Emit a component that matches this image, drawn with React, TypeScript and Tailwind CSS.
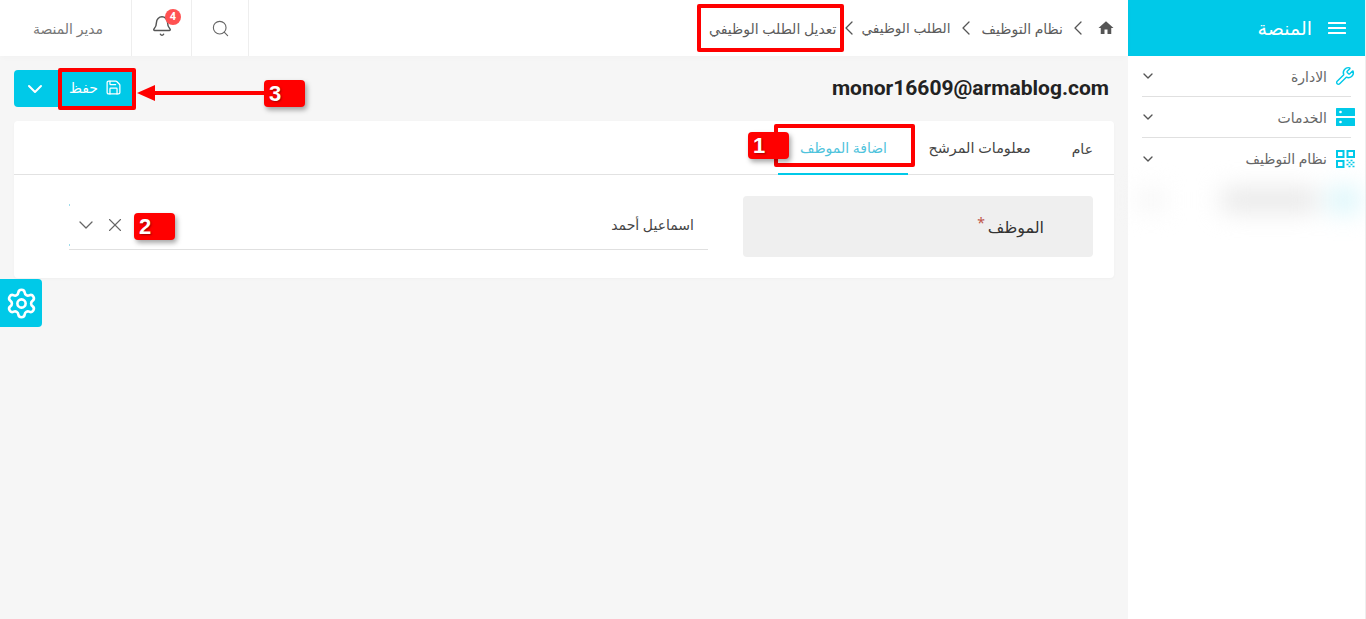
import React from 'react';
import { Bell, ChevronDown, ChevronLeft, Save, Search, Settings, Wrench, X } from 'lucide-react';

const font = "font-['Noto_Sans','DejaVu_Sans',sans-serif]";

const HomeIcon = () => (
    <svg width="18" height="18" viewBox="0 0 24 24" fill="#555555">
        <path d="M10 20v-6h4v6h5v-8h3L12 3 2 12h3v8z" />
    </svg>
);

const BurgerIcon = () => (
    <svg width="18" height="12" viewBox="0 0 18 12" fill="#ffffff">
        <rect x="0" y="0" width="18" height="2" rx="0.5" />
        <rect x="0" y="5" width="18" height="2" rx="0.5" />
        <rect x="0" y="10" width="18" height="2" rx="0.5" />
    </svg>
);

const ServerIcon = () => (
    <svg width="19" height="18" viewBox="0 0 19 18" fill="#00c9e8">
        <rect x="0" y="0" width="19" height="8" rx="0.5" />
        <rect x="0" y="10" width="19" height="8" rx="0.5" />
        <circle cx="4.500" cy="4" r="1.300" fill="#fff" />
        <circle cx="4.500" cy="14" r="1.300" fill="#fff" />
    </svg>
);

const QrIcon = () => (
    <svg width="19" height="18" viewBox="0 0 19 18" fill="none" stroke="#00c9e8" strokeWidth="2">
        <rect x="1" y="1" width="6.500" height="6" />
        <rect x="11.500" y="1" width="6.500" height="6" />
        <rect x="1" y="11" width="6.500" height="6" />
        <path d="M10.500 10.500h2M14.500 10.500h2M12.500 12.500h2M16.500 12.500h2M10.500 14.500h2M14.500 14.500h2M12.500 16.500h2M16.500 16.500h2" strokeWidth="1.700" />
    </svg>
);

const menuItems = [
    { label: 'الادارة', icon: <Wrench className="w-[22px] h-[22px] text-[#00c9e8] -ml-px" strokeWidth={1.7} /> },
    { label: 'الخدمات', icon: <ServerIcon /> },
    { label: 'نظام التوظيف', icon: <QrIcon /> },
];

const Sidebar = () => (
    <aside className="w-[238px] shrink-0 bg-white border-r border-[#eeeeee] flex flex-col">
        <div className="h-[56px] bg-[#00c9e8] flex items-center gap-[16px] pr-[19px] text-white">
            <BurgerIcon />
            <span className="text-[19px]">المنصة</span>
        </div>
        <div className="px-[14px]">
            {menuItems.map((item, i) => (
                <div
                    key={item.label}
                    className={`h-[41px] flex items-center ${i < 2 ? 'border-b border-[#e0e0e0]' : ''}`}
                >
                    <div className="w-[19px] -mr-[4px] flex justify-center">{item.icon}</div>
                    <span className="text-[14px] text-[#666666] mr-[9px]">{item.label}</span>
                    <ChevronDown className="w-[16px] h-[16px] mr-auto -ml-[2px] text-[#555555]" />
                </div>
            ))}
        </div>
        <div className="mt-[6px] h-[30px] flex items-center blur-[12px] pr-[6px] gap-[11px]">
            <div className="w-[30px] h-[24px] bg-[#d6f5fa]" />
            <div className="w-[96px] h-[22px] bg-[#e6e6e6]" />
            <div className="w-[20px] h-[20px] mr-[50px] bg-[#f2f2f2]" />
        </div>
    </aside>
);

const Crumb = ({ label, className }: { label: string; className: string }) => (
    <>
        <ChevronLeft className="w-[24px] h-[24px] text-[#555555] shrink-0" strokeWidth={1.3} />
        <span className={className}>{label}</span>
    </>
);

const TopBar = () => (
    <header className="h-[56px] bg-white flex items-center shrink-0 shadow-[0_2px_6px_rgba(0,0,0,0.02)]">
        <div className="flex items-center pr-[13px] text-[#5c5c5c]">
            <HomeIcon />
            <div className="w-[7px]" />
            <Crumb label="نظام التوظيف" className="text-[14px] mr-[3px] ml-[4px]" />
            <Crumb label="الطلب الوظيفي" className="text-[13.7px] mr-[3px]" />
            <Crumb label="تعديل الطلب الوظيفي" className="text-[14px] mr-[1px]" />
        </div>
        <div className="mr-auto flex h-full">
            <div className="w-[58px] border-x border-[#eeeeee] flex items-center justify-center">
                <Search className="w-[19px] h-[19px] text-[#666666]" strokeWidth={1.4} />
            </div>
            <div className="w-[60px] border-l border-[#eeeeee] flex items-center justify-center relative">
                <Bell className="w-[22px] h-[22px] text-[#555555] -mt-[4px]" strokeWidth={1.6} />
                <span className="absolute top-[9px] left-[33px] w-[16px] h-[16px] rounded-full bg-[#ff5252] text-white text-[11px] font-bold flex items-center justify-center font-['Roboto',sans-serif]">4</span>
            </div>
            <div className="w-[131px] flex items-center justify-center pl-[5px] text-[14px] text-[#777777]">مدير المنصة</div>
        </div>
    </header>
);

const Tabs = () => (
    <div className="h-[54px] border-b border-[#e2e2e2] flex pr-[21px] pt-[1px] text-[14px] text-[#444444]">
        <div className="h-full ml-[41px] flex items-center">عام</div>
        <div className="h-full ml-[20px] flex items-center text-[14.4px]">معلومات المرشح</div>
        <div className="h-[54px] w-[130px] -mt-[1px] border-b-2 border-[#00c9e8] flex items-center justify-center text-[#4fc3dc]">
            اضافة الموظف
        </div>
    </div>
);

const EmployeeField = () => (
    <div className="flex pt-[21px] pr-[21px] pb-[21px] pl-[55px] gap-[35px]">
        <div className="w-[350px] h-[61px] rounded bg-[#efefef] flex items-center pr-[49px] text-[16px] text-[#333333] shrink-0">
            الموظف
            <span className="text-[#c0564b] mr-[3px] -mt-[8px] text-[14px]">*</span>
        </div>
        <div className="relative flex-1 h-[54px] border-b border-[#e0e0e0] flex items-center pr-[14px] pt-[4px] text-[14px] text-[#444444]">
            اسماعيل أحمد
            <X className="w-[22px] h-[22px] mr-auto text-[#666666]" strokeWidth={1.2} />
            <ChevronDown className="w-[24px] h-[24px] mr-[6px] ml-[5px] text-[#666666]" strokeWidth={1.3} />
            <span className="absolute left-0 top-[8px] w-px h-[2px] bg-[#9fdcec]" />
            <span className="absolute left-0 top-[48px] w-px h-[2px] bg-[#9fdcec]" />
        </div>
    </div>
);

const NumberBadge = ({ n, className }: { n: number; className: string }) => (
    <div className={`absolute h-[27px] w-[41px] rounded bg-[#ff0000] shadow-[2px_3px_5px_rgba(0,0,0,0.35)] text-white font-bold text-[22px] leading-[27px] pl-[5px] text-left [text-shadow:1px_1px_2px_rgba(120,0,0,0.7)] font-['Liberation_Sans',sans-serif] ${className}`}>
        {n}
    </div>
);

const Annotations = () => (
    <>
        <div className="absolute left-[697px] top-[4px] w-[147px] h-[48px] border-[4px] border-[#ff0000] rounded-[2px]" />
        <div className="absolute left-[774px] top-[124px] w-[141px] h-[43px] border-[4px] border-[#ff0000] rounded-[2px]" />
        <div className="absolute left-[58px] top-[68px] w-[78px] h-[42px] border-[4px] border-[#ff0000] rounded-[2px]" />
        <NumberBadge n={1} className="left-[748px] top-[132px]" />
        <NumberBadge n={2} className="left-[134px] top-[213px]" />
        <NumberBadge n={3} className="left-[264px] top-[80px]" />
        <svg className="absolute left-[136px] top-[84px]" width="130" height="18" viewBox="0 0 130 18">
            <path d="M1 9 L19 1 V7 H130 V11 H19 V17 Z" fill="#ff0000" />
        </svg>
    </>
);

export default function App() {
    return (
        <div dir="rtl" className={`relative flex h-[619px] w-[1366px] overflow-hidden bg-[#f6f6f6] ${font}`}>
            <Sidebar />
            <main className="flex-1 flex flex-col min-w-0">
                <TopBar />
                <div className="px-[14px]">
                    <div className="h-[65px] flex items-center pr-[5px]">
                        <h1 dir="ltr" className="text-[21px] font-bold text-[#222222] font-['Roboto',sans-serif]">monor16609@armablog.com</h1>
                        <div className="mr-auto flex h-[37px] rounded overflow-hidden bg-[#00c9e8] text-white">
                            <button className="w-[75px] flex items-center justify-center gap-[7px] text-[14px] pb-[2px]">
                                <Save className="w-[17px] h-[17px]" strokeWidth={1.8} />
                                حفظ
                            </button>
                            <button className="w-[44px] flex items-center justify-center pr-[2px]">
                                <ChevronDown className="w-[24px] h-[24px]" strokeWidth={2} />
                            </button>
                        </div>
                    </div>
                    <section className="bg-white rounded shadow-[0_1px_3px_rgba(0,0,0,0.03)]">
                        <Tabs />
                        <EmployeeField />
                    </section>
                </div>
            </main>
            <div className="absolute left-0 top-[279px] w-[42px] h-[48px] bg-[#00c9e8] rounded-r flex items-center justify-center text-white">
                <Settings className="w-[33px] h-[33px]" strokeWidth={1.9} />
            </div>
            <Annotations />
        </div>
    );
}
